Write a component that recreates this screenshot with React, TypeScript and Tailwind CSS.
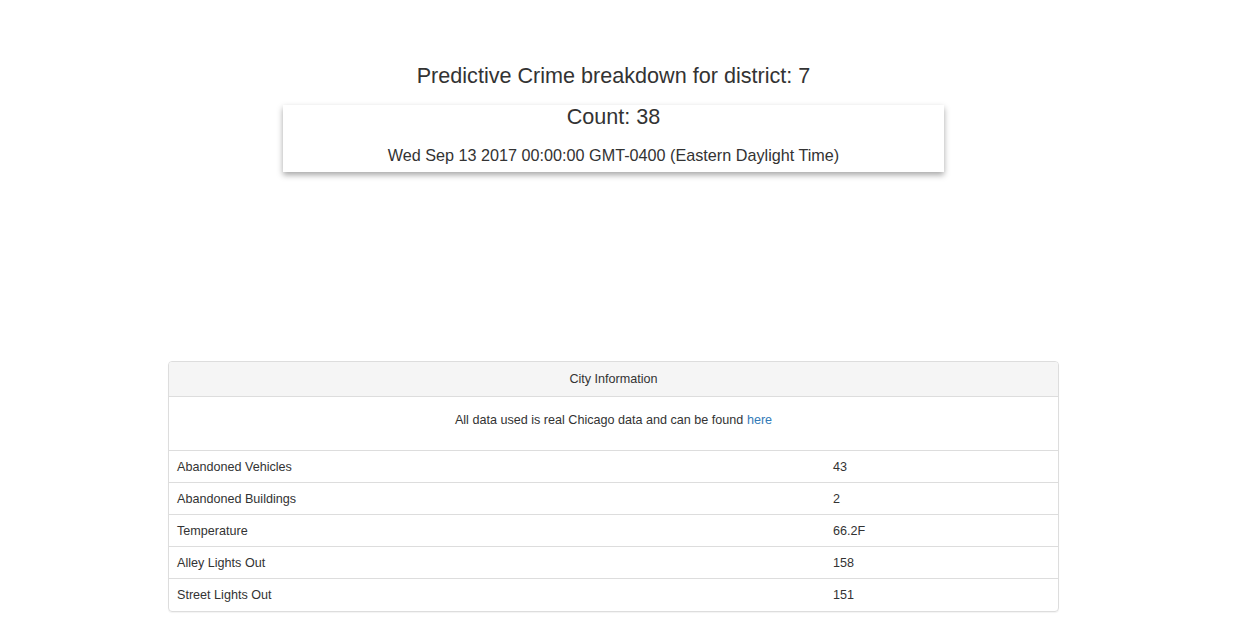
import React from 'react';

const rows = [
  { label: 'Abandoned Vehicles', value: '43' },
  { label: 'Abandoned Buildings', value: '2' },
  { label: 'Temperature', value: '66.2F' },
  { label: 'Alley Lights Out', value: '158' },
  { label: 'Street Lights Out', value: '151' },
];

const App: React.FC = () => {
  return (
    <div className="min-h-screen bg-white text-[#333] font-['Liberation_Sans',Arial,sans-serif] text-[12.6px]">
      <div className="w-[1227px] flex flex-col items-center">
        <h2 className="mt-[62px] text-[21.6px] leading-[28px] text-center">
          Predictive Crime breakdown for district: 7
        </h2>
        <div className="mt-[15px] w-[661px] h-[67px] bg-white shadow-[0_3px_6px_rgba(0,0,0,0.35)] flex flex-col items-center">
          <div className="text-[21.6px] leading-[24px]">Count: 38</div>
          <div className="text-[16.2px] leading-[20px] mt-[16px]">
            Wed Sep 13 2017 00:00:00 GMT-0400 (Eastern Daylight Time)
          </div>
        </div>

        <div className="mt-[189px] w-[891px] border border-[#ddd] rounded-[4px] shadow-[0_1px_1px_rgba(0,0,0,0.05)] overflow-hidden">
          <div className="h-[35px] bg-[#f5f5f5] border-b border-[#ddd] flex items-center justify-center">
            City Information
          </div>
          <div className="h-[54px] border-b border-[#ddd] flex justify-center pt-[14px]">
            <span>
              All data used is real Chicago data and can be found{' '}
              <a href="#" className="text-[#337ab7]">here</a>
            </span>
          </div>
          {rows.map((r, i) => (
            <div
              key={r.label}
              className={`grid grid-cols-[656px_1fr] h-[32px] items-center pt-[1px] ${i < rows.length - 1 ? 'border-b border-[#ddd]' : ''}`}
            >
              <div className="px-[8px]">{r.label}</div>
              <div className="px-[8px]">{r.value}</div>
            </div>
          ))}
        </div>
      </div>
    </div>
  );
};

export default App;
